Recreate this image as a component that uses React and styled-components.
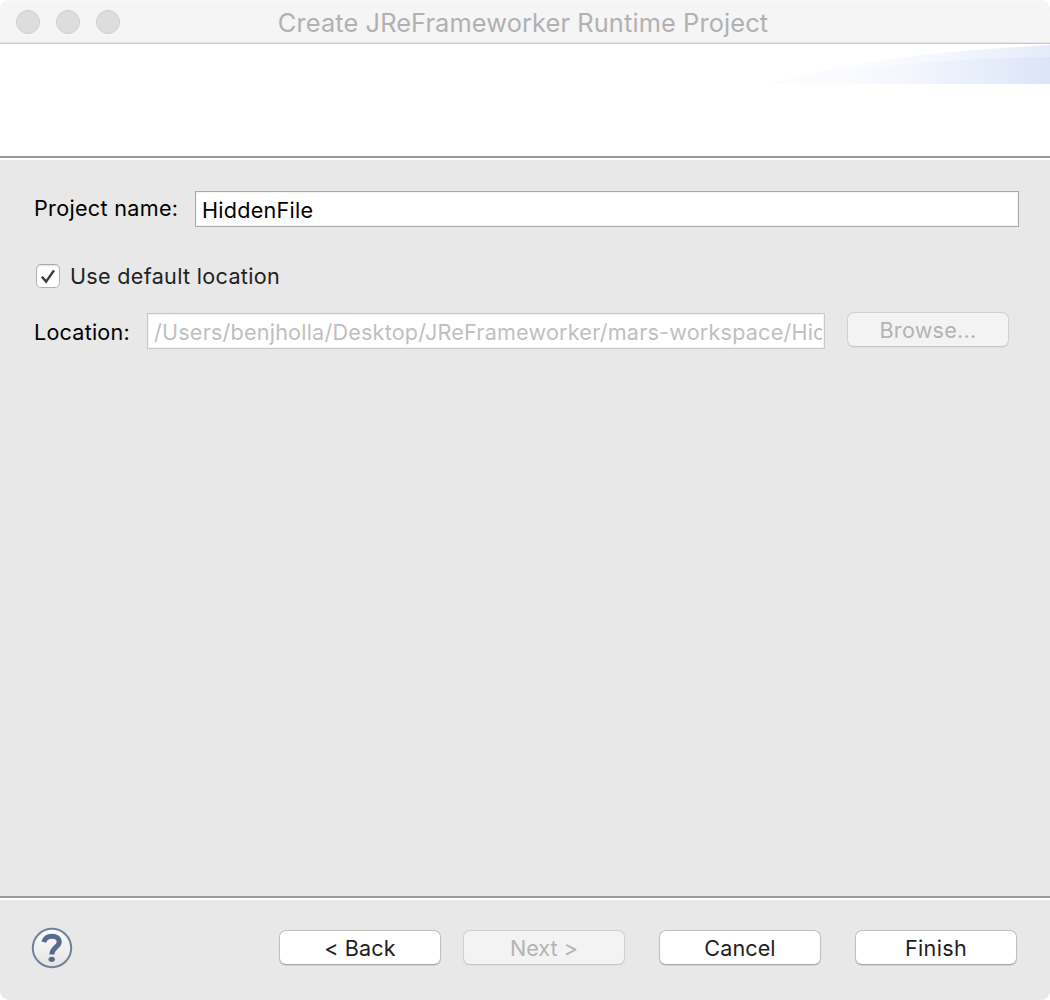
import React from "react";
import styled, { createGlobalStyle } from "styled-components";

const Global = createGlobalStyle`
  * { box-sizing: border-box; }
  body { margin: 0; background: #fff; }
`;

const Window = styled.div`
  display: flex;
  flex-direction: column;
  width: 1050px;
  height: 1000px;
  overflow: hidden;
  border-radius: 10px 10px 9px 9px;
  background: #e8e8e8;
  font-family: Inter, "Liberation Sans", sans-serif;
  font-size: 21.6px;
  color: #000;
`;

const TitleBar = styled.header`
  display: grid;
  grid-template-columns: 1fr auto 1fr;
  align-items: center;
  height: 44px;
  padding: 0 20px 0 16px;
  background: linear-gradient(#fafafa, #f5f5f5 2px);
  border-bottom: 1px solid #c9c9c9;
  box-shadow: inset 0 -1px #e6e6e6;
`;

const Lights = styled.div`
  display: flex;
  gap: 16px;
`;

const Light = styled.span`
  width: 24px;
  height: 24px;
  border-radius: 50%;
  border: 1px solid #cecece;
  background: #dddddd;
`;

const Title = styled.h1`
  margin: 0;
  padding-top: 2px;
  font-size: 25.4px;
  font-weight: 400;
  line-height: 40px;
  letter-spacing: 0.1px;
  white-space: nowrap;
  color: #b1b1b1;
`;

const Banner = styled.section`
  display: flex;
  justify-content: flex-end;
  height: 112px;
  background: #fff;
`;

const Rule = styled.div`
  flex: none;
  height: 4px;
  border-top: 2px solid #9c9c9c;
  background: #fff;
`;

const Content = styled.main`
  flex: 1;
  padding: 31px 31px 0 34px;
`;

const Row = styled.div`
  display: flex;
  align-items: flex-start;
  margin-bottom: ${(p) => p.$after || 0}px;
`;

const Label = styled.label`
  flex: none;
  width: ${(p) => (p.$width ? `${p.$width}px` : "auto")};
  padding-top: ${(p) => p.$top || 0}px;
  line-height: 30px;
  letter-spacing: ${(p) => p.$track ?? 0.3}px;
  white-space: nowrap;
  color: ${(p) => p.$color || "#000"};
`;

const Field = styled.div`
  flex: ${(p) => (p.$width ? "none" : 1)};
  width: ${(p) => (p.$width ? `${p.$width}px` : "auto")};
  height: 36px;
  margin-top: ${(p) => p.$top || 0}px;
  padding: 3px 2px 0 6px;
  border: 1px solid ${(p) => (p.$disabled ? "#c9c9c9" : "#a9a9a9")};
  background: #fff;
  box-shadow: inset 0 0 0 1px #f3f3f3;
  color: ${(p) => (p.$disabled ? "#bfbfbf" : "#000")};
`;

const Value = styled.div`
  overflow: hidden;
  line-height: 30px;
  letter-spacing: ${(p) => p.$track}px;
  white-space: nowrap;
`;

const CheckBox = styled.span`
  display: grid;
  place-items: center;
  width: 24px;
  height: 24px;
  margin: 3px 10px 0 2px;
  border: 1px solid #b4b4b4;
  border-top-color: #a6a6a6;
  border-radius: 5px;
  background: #fff;
  box-shadow: inset 0 1px 2px #e2e2e2;
`;

const Button = styled.button`
  width: 162px;
  height: 35px;
  margin: 0 0 0 ${(p) => p.$gap || 0}px;
  padding: 0;
  border: 1px solid ${(p) => (p.disabled ? "#d0d0d0" : "#bfbfbf")};
  border-bottom-color: ${(p) => (p.disabled ? "#c6c6c6" : "#a8a8a8")};
  border-radius: 7px;
  background: ${(p) => (p.disabled ? "#f3f3f3" : "#fff")};
  box-shadow: 0 1px 1px ${(p) => (p.disabled ? "#dfdfdf" : "#d0d0d0")};
  font: inherit;
  line-height: 30px;
  letter-spacing: ${(p) => p.$track || 0}px;
  color: ${(p) => (p.disabled ? "#b3b3b3" : "#1e1e1e")};
`;

const Footer = styled.footer`
  display: flex;
  align-items: flex-start;
  height: 100px;
  padding: 30px 33px 0 31px;
`;

const HelpSlot = styled.div`
  flex: 1;
  display: flex;
  margin-top: -3px;
`;

function Swoosh() {
  return (
    <svg width="280" height="40" viewBox="0 0 280 40">
      <defs>
        <linearGradient id="outer" x1="0" x2="1">
          <stop offset="0" stopColor="#fbfcff" />
          <stop offset="0.4" stopColor="#f9fbfe" />
          <stop offset="0.7" stopColor="#f1f5fd" />
          <stop offset="1" stopColor="#e5ebfa" />
        </linearGradient>
        <linearGradient id="inner" gradientUnits="userSpaceOnUse" x1="80" x2="280" y1="0" y2="0">
          <stop offset="0" stopColor="#fafbff" />
          <stop offset="0.3" stopColor="#f3f6fd" />
          <stop offset="0.65" stopColor="#e7edfa" />
          <stop offset="1" stopColor="#dce4f8" />
        </linearGradient>
      </defs>
      <path d="M0 40C80 17 180 6 280 1V40Z" fill="url(#outer)" />
      <path d="M80 40V26C140 19 200 14 280 13V40Z" fill="url(#inner)" />
    </svg>
  );
}

function CheckMark() {
  return (
    <svg width="22" height="22" viewBox="0 0 22 22">
      <path d="M4.8 11.7 9.1 16.6 17 5.4" fill="none" stroke="#3c3c3c" strokeWidth="2.5" />
    </svg>
  );
}

function HelpIcon() {
  return (
    <svg width="42" height="42" viewBox="0 0 42 42">
      <defs>
        <linearGradient id="disc" x1="0" x2="0" y1="0" y2="1">
          <stop offset="0" stopColor="#fcfcfc" />
          <stop offset="1" stopColor="#e4e4e4" />
        </linearGradient>
      </defs>
      <circle cx="21" cy="21" r="19.2" fill="url(#disc)" stroke="#71819c" strokeWidth="2" />
      <path
        d="M12.8 15.2C14 10.9 16.8 9.3 20.8 9.3C25.5 9.3 28.2 11.4 28.2 14.9C28.2 20 20.9 20.6 20.9 27.4"
        fill="none"
        stroke="#566b8d"
        strokeWidth="5"
      />
      <ellipse cx="20.7" cy="32.3" rx="3.2" ry="2.6" fill="#566b8d" />
    </svg>
  );
}

export default function App() {
  return (
    <>
      <Global />
      <Window>
        <TitleBar>
          <Lights>
            <Light />
            <Light />
            <Light />
          </Lights>
          <Title>Create JReFrameworker Runtime Project</Title>
        </TitleBar>
        <Banner>
          <Swoosh />
        </Banner>
        <Rule />
        <Content>
          <Row $after={34}>
            <Label $width={161} $top={2}>Project name:</Label>
            <Field>
              <Value $track={0.25}>HiddenFile</Value>
            </Field>
          </Row>
          <Row $after={21}>
            <CheckBox>
              <CheckMark />
            </CheckBox>
            <Label $color="#222">Use default location</Label>
          </Row>
          <Row>
            <Label $width={113} $top={5} $track={0.2}>Location:</Label>
            <Field $disabled $width={678} $top={1}>
              <Value $track={0.2}>
                /Users/benjholla/Desktop/JReFrameworker/mars-workspace/Hid
              </Value>
            </Field>
            <Button disabled $gap={22} $track={0.25}>Browse...</Button>
          </Row>
        </Content>
        <Rule />
        <Footer>
          <HelpSlot>
            <HelpIcon />
          </HelpSlot>
          <Button $track={0.1}>&lt; Back</Button>
          <Button disabled $gap={22}>Next &gt;</Button>
          <Button $gap={34} $track={0.1}>Cancel</Button>
          <Button $gap={34} $track={0.3}>Finish</Button>
        </Footer>
      </Window>
    </>
  );
}
